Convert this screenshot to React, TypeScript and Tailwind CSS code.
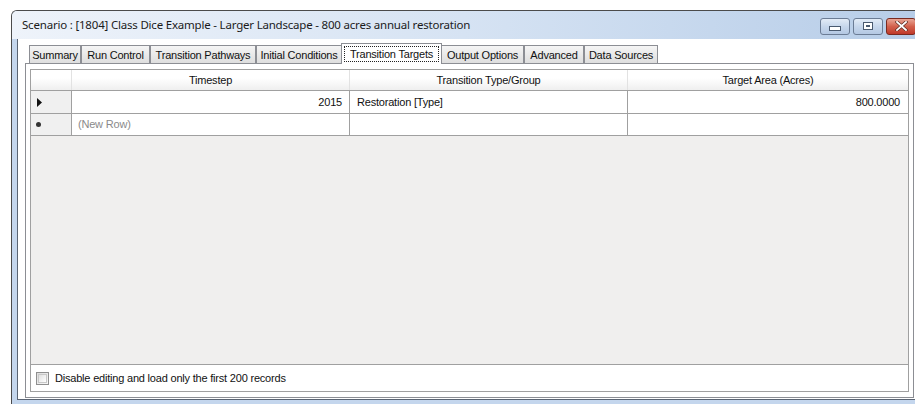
import React from 'react';

const tabs = [
  { label: 'Summary', w: 'w-[52px]' },
  { label: 'Run Control', w: 'w-[69px]' },
  { label: 'Transition Pathways', w: 'w-[106px]' },
  { label: 'Initial Conditions', w: 'w-[86px]' },
  { label: 'Transition Targets', w: 'w-[101px]', active: true },
  { label: 'Output Options', w: 'w-[83px]' },
  { label: 'Advanced', w: 'w-[60px]' },
  { label: 'Data Sources', w: 'w-[74px]' },
];

const ui = "font-['Liberation_Sans',Arial,sans-serif] text-[11px] tracking-[-0.2px] text-[#111] whitespace-nowrap";

const CaptionButton: React.FC<{ kind: 'min' | 'max' | 'close' }> = ({ kind }) => {
  if (kind === 'close') {
    return (
      <div className="w-[30px] h-[17px] rounded-[3px] border border-[#7a2a20] bg-gradient-to-b from-[#e8a595] via-[#d2604c] to-[#c0392a] flex items-center justify-center">
        <svg width="13" height="10" viewBox="0 0 13 10">
          <path d="M2 1 L11 9 M11 1 L2 9" stroke="#5a2a22" strokeWidth="3.2" strokeLinecap="square" />
          <path d="M2 1 L11 9 M11 1 L2 9" stroke="#ffffff" strokeWidth="1.8" strokeLinecap="square" />
        </svg>
      </div>
    );
  }
  return (
    <div className="w-[30px] h-[17px] rounded-[3px] border border-[#6b7c95] bg-gradient-to-b from-[#e3ecf7] via-[#c7d7ec] to-[#b4c8e3] flex items-center justify-center">
      {kind === 'min' ? (
        <div className="w-[12px] h-[5px] mt-[4px] bg-white border border-[#4a5a70]" />
      ) : (
        <div className="w-[10px] h-[8px] bg-white border border-[#4a5a70] flex items-center justify-center">
          <div className="w-[4px] h-[2px] border border-[#4a5a70]" />
        </div>
      )}
    </div>
  );
};

export default function App() {
  return (
    <div className="w-[915px] h-[404px] bg-white overflow-hidden pt-[10px] pl-[11px]">
      {/* window frame */}
      <div className="w-[906px] h-[400px] border-l border-t border-[#4b4b4b] rounded-tl-[6px] bg-[#c4d6ed] pb-[10px] flex flex-col">
        <div className="h-[28px] shrink-0 rounded-tl-[5px] bg-gradient-to-r from-[#eef3fa] via-[#d6e3f3] to-[#b7cde8] flex items-center pl-[10px] pr-[1px]">
          <span className="font-['Noto_Sans',sans-serif] text-[11.5px] text-[#1b1b1b] tracking-[-0.2px]">
            Scenario : [1804] Class Dice Example - Larger Landscape - 800 acres annual restoration
          </span>
          <div className="ml-auto flex gap-[3px] mt-[2px]">
            <CaptionButton kind="min" />
            <CaptionButton kind="max" />
            <CaptionButton kind="close" />
          </div>
        </div>

        {/* client area */}
        <div className="flex-1 ml-[5px] border-l border-b border-[#5a6473] bg-white pl-[7px] pt-[4px] flex flex-col">
          <div className={`flex items-end h-[20px] pl-[4px] ${ui}`}>
            {tabs.map((t) =>
              t.active ? (
                <div
                  key={t.label}
                  className={`${t.w} h-[21px] -mb-[1px] relative z-10 border border-b-0 border-[#8c8e94] bg-white px-[2px] pt-[2px] mx-[-1px]`}
                >
                  <div className="h-[16px] border border-dotted border-[#222] flex items-center justify-center leading-none">
                    {t.label}
                  </div>
                </div>
              ) : (
                <div
                  key={t.label}
                  className={`${t.w} h-[18px] pt-[1px] border border-b-0 border-[#8c8e94] bg-gradient-to-b from-[#f5f5f5] to-[#dedede] flex items-center justify-center leading-none`}
                >
                  {t.label}
                </div>
              )
            )}
          </div>

          {/* tab page */}
          <div className="w-[889px] h-[335px] border border-[#8c8e94] bg-white px-[4px] pt-[5px] pb-[5px]">
            <div className={`h-full border border-[#a0a0a0] flex flex-col ${ui}`}>
              <div className="flex-1 bg-[#f0efee] flex flex-col">
                {/* header */}
                <div className="grid grid-cols-[41px_278px_278px_1fr] h-[21px] border-b border-[#a0a0a0] bg-gradient-to-b from-white from-40% to-[#efefef]">
                  <div className="border-r border-[#e2e2e2]" />
                  <div className="border-r border-[#e2e2e2] flex items-center justify-center">Timestep</div>
                  <div className="border-r border-[#e2e2e2] flex items-center justify-center">Transition Type/Group</div>
                  <div className="flex items-center justify-center">Target Area (Acres)</div>
                </div>
                {/* first row */}
                <div className="grid grid-cols-[41px_278px_278px_1fr] h-[23px] border-b border-[#a0a0a0] bg-white">
                  <div className="bg-[#f0f0f0] border-r border-[#a0a0a0] flex items-center pl-[6px]">
                    <svg width="5" height="9" viewBox="0 0 5 9">
                      <path d="M0 0 L5 4.5 L0 9 Z" fill="#111" />
                    </svg>
                  </div>
                  <div className="border-r border-[#a0a0a0] flex items-center justify-end pr-[7px]">2015</div>
                  <div className="border-r border-[#a0a0a0] flex items-center pl-[7px]">Restoration [Type]</div>
                  <div className="flex items-center justify-end pr-[8px]">800.0000</div>
                </div>
                {/* new row */}
                <div className="grid grid-cols-[41px_278px_278px_1fr] h-[22px] border-b border-[#a0a0a0] bg-white">
                  <div className="bg-[#f0f0f0] border-r border-[#a0a0a0] flex items-center pl-[5px]">
                    <div className="w-[5px] h-[5px] rounded-full bg-[#333]" />
                  </div>
                  <div className="border-r border-[#a0a0a0] flex items-center pl-[6px] text-[#8a8a8a]">(New Row)</div>
                  <div className="border-r border-[#a0a0a0]" />
                  <div />
                </div>
              </div>
              <div className="h-[27px] shrink-0 border-t border-[#a0a0a0] bg-white flex items-center pl-[5px] gap-[6px]">
                <div className="w-[13px] h-[13px] border border-[#8f8f8f] bg-gradient-to-br from-[#dcdcdc] to-[#f8f8f8] p-[1px]">
                  <div className="w-full h-full border border-[#c8c8c8] bg-gradient-to-br from-[#e0e0e0] to-white" />
                </div>
                <span>Disable editing and load only the first 200 records</span>
              </div>
            </div>
          </div>
        </div>
      </div>
    </div>
  );
}
